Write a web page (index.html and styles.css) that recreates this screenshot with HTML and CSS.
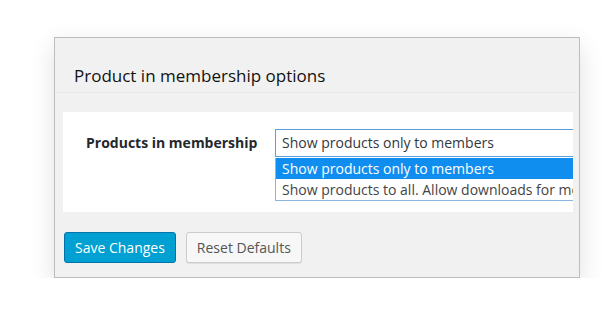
FILE: index.html
```html
<!doctype html>
<html lang="en">
    <head>
        <meta charset="UTF-8" />
        <title>Product in membership options</title>
        <link rel="stylesheet" href="styles.css">
    </head>
    <body>
        <div class="panel">
            <h2 class="panel-title">Product in membership options</h2>
            <div class="form-box">
                <div class="form-row">
                    <div class="label">Products in membership</div>
                    <div class="select-wrap">
                        <div class="select">Show products only to members</div>
                        <ul class="options">
                            <li class="option selected">Show products only to members</li>
                            <li class="option">Show products to all. Allow downloads for members only</li>
                        </ul>
                    </div>
                </div>
            </div>
            <div class="actions">
                <button class="btn btn-primary">Save Changes</button>
                <button class="btn">Reset Defaults</button>
            </div>
        </div>
    </body>
</html>
```

FILE: styles.css
```css
body {
    margin: 0;
    padding: 37px 0 0 54px;
    background: #fff;
    font-family: "Open Sans", sans-serif;
    color: #23282d;
}

.panel {
    width: 526px;
    height: 241px;
    background: #f1f1f1;
    border: 1px solid #bdbdbd;
    box-shadow: 0 8px 24px rgba(0, 0, 0, 0.12);
    box-sizing: border-box;
}

.panel-title {
    margin: 0 2px 0 0;
    padding: 26px 0 0 19px;
    height: 55px;
    font-size: 17px;
    font-weight: 400;
    color: #111;
    border-bottom: 1px solid #e9e9e9;
    box-sizing: border-box;
}

/* white box clips the open list, like the screenshot */
.form-box {
    margin: 19px 6px 0 8px;
    height: 100px;
    background: #fff;
    overflow: hidden;
}

.form-row {
    display: flex;
    padding: 17px 0 0 23px;
}

.label {
    flex: none;
    width: 189px;
    font-size: 14px;
    font-weight: 700;
    line-height: 28px;
    white-space: nowrap;
    color: #23282d;
}

.select-wrap {
    flex: none;
    width: 420px;
}

.select {
    height: 28px;
    line-height: 26px;
    padding: 0 6px;
    font-size: 14px;
    color: #32373c;
    border: 1px solid #5b9dd9;
    box-sizing: border-box;
}

.options {
    list-style: none;
    margin: 1px 0 0;
    padding: 0;
    border: 1px solid #8ab6e3;
    border-top: none;
}

.option {
    height: 21px;
    line-height: 21px;
    padding: 0 6px;
    font-size: 14px;
    color: #444;
    white-space: nowrap;
}

.option.selected {
    background: #0f8ef0;
    color: #fff;
}

.actions {
    display: flex;
    gap: 10px;
    margin-top: 20px;
    padding: 0 0 0 9px;
}

.btn {
    height: 31px;
    padding: 0 10px;
    font-family: "Open Sans", sans-serif;
    font-size: 14px;
    color: #555;
    background: #f7f7f7;
    border: 1px solid #cccccc;
    border-radius: 3px;
    box-shadow: 0 1px 0 #e0e0e0;
}

.btn-primary {
    background: #00a0d2;
    border-color: #0073aa;
    color: #fff;
    box-shadow: none;
}
```
